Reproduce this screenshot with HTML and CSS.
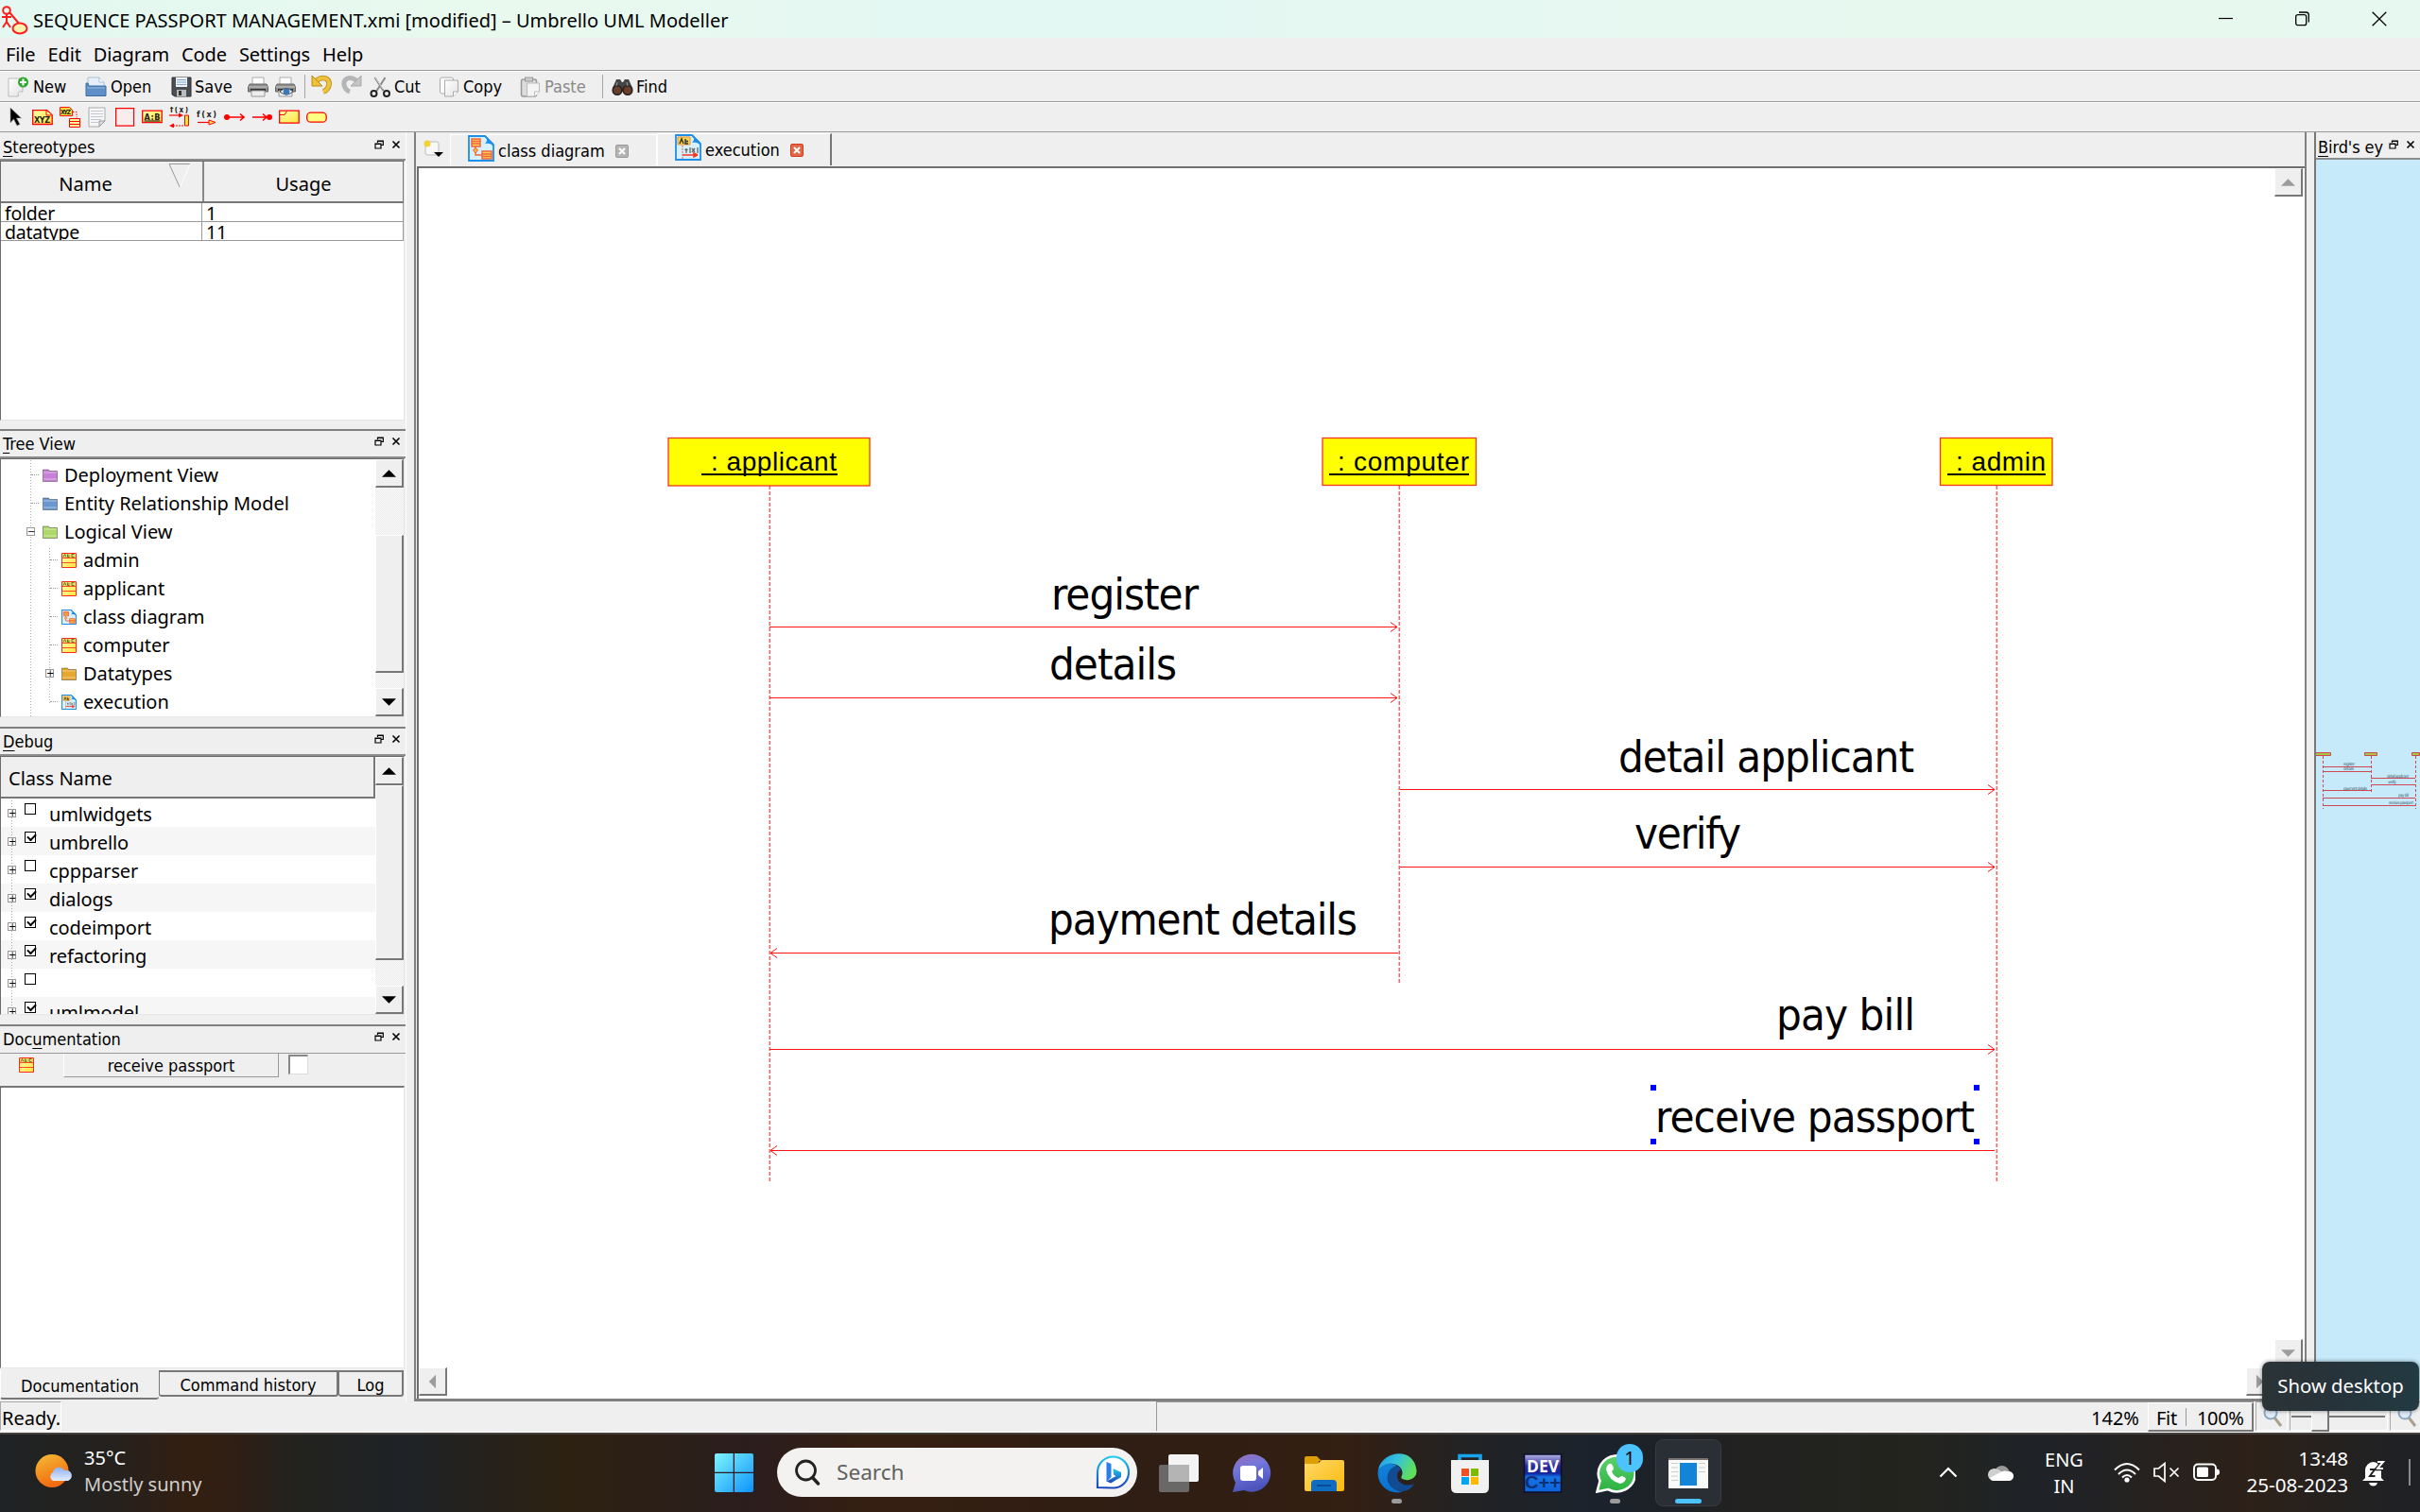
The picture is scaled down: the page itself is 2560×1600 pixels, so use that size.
FILE: index.html
```html
<!DOCTYPE html>
<html lang="en">
<head>
<meta charset="utf-8">
<title>SEQUENCE PASSPORT MANAGEMENT.xmi [modified] – Umbrello UML Modeller</title>
<link rel="stylesheet" href="styles.css">
</head>
<body>
<svg class="defs" width="0" height="0">
  <defs>
    <linearGradient id="gYellow" x1="0" y1="0" x2="1" y2="1"><stop offset="0" stop-color="#ffffb0"/><stop offset="1" stop-color="#ffe43a"/></linearGradient>
    <linearGradient id="gPaper" x1="0" y1="0" x2="1" y2="1"><stop offset="0" stop-color="#fff"/><stop offset="1" stop-color="#e2e2e2"/></linearGradient>
    <linearGradient id="gWin" x1="0" y1="0" x2="1" y2="1"><stop offset="0" stop-color="#7ff4fe"/><stop offset="1" stop-color="#0c93fb"/></linearGradient>
    <linearGradient id="gSun" x1="0" y1="0" x2="0.4" y2="1"><stop offset="0" stop-color="#f3bd35"/><stop offset="1" stop-color="#f36a10"/></linearGradient>
    <linearGradient id="gCloud" x1="0" y1="0" x2="0" y2="1"><stop offset="0" stop-color="#8fb0ee"/><stop offset="1" stop-color="#e4edff"/></linearGradient>
    <linearGradient id="gChat" x1="0" y1="0" x2="0.3" y2="1"><stop offset="0" stop-color="#9b6fb5"/><stop offset=".4" stop-color="#7477dc"/><stop offset="1" stop-color="#4b53bc"/></linearGradient>
    <linearGradient id="gFold" x1="0" y1="0" x2="1" y2="1"><stop offset="0" stop-color="#ffd968"/><stop offset="1" stop-color="#fbb90c"/></linearGradient>
    <linearGradient id="gEdge" x1="0" y1="0" x2="1" y2=".4"><stop offset="0" stop-color="#1c9be8"/><stop offset=".5" stop-color="#35c1de"/><stop offset="1" stop-color="#5fe05c"/></linearGradient>
    <linearGradient id="gEdge2" x1="0" y1="0" x2="0" y2="1"><stop offset="0" stop-color="#1283d8"/><stop offset="1" stop-color="#0a6fd0"/></linearGradient>
    <linearGradient id="gBing" x1="0" y1="0" x2="0" y2="1"><stop offset="0" stop-color="#22c8ee"/><stop offset="1" stop-color="#1a45b8"/></linearGradient>
    <linearGradient id="gDev" x1="0" y1="0" x2="0" y2="1"><stop offset="0" stop-color="#b9b7e8"/><stop offset=".3" stop-color="#2a2c9c"/><stop offset=".5" stop-color="#15249a"/><stop offset=".6" stop-color="#1673e6"/><stop offset="1" stop-color="#0c63d8"/></linearGradient>
    <linearGradient id="gWa" x1="0" y1="0" x2="0" y2="1"><stop offset="0" stop-color="#5fd070"/><stop offset="1" stop-color="#2bb23f"/></linearGradient>
    <symbol id="float" viewBox="0 0 10 10"><path d="M3.500 3V1H9.300v4.500H7M3 1.500h6.500M1 4h6v5H1zM.5 4.500h7" fill="none" stroke="#000" stroke-width="1.200"/></symbol>
    <symbol id="close" viewBox="0 0 10 10"><path d="M1.500 1.500l7 7M8.500 1.500l-7 7" stroke="#000" stroke-width="1.600"/></symbol>
    <symbol id="class" viewBox="0 0 16 16"><path d="M.5.5h15v15H.5z" fill="url(#gYellow)" stroke="#ff2a1a"/><path d="M1 5.500h14M1 10.500h14" stroke="#ff4a2a"/><path d="M1 1h14v4H1z" fill="#e7dc6a"/><path d="M2 4.500l1.500-3L5 4.500M6.500 1.500v3h2M6.500 3h2M13.500 1.500h-2.500v3h2.500" stroke="#5a5a1a" stroke-width=".8" fill="none"/></symbol>
    <symbol id="cdiag" viewBox="0 0 28 28"><path d="M1 1h17l9 9v17H1z" fill="#d6f0fc" stroke="#1d8fe8" stroke-width="1.800"/><path d="M17 1c4 2 4 5 1 8 4-1 7 0 9 3v-3L19 1z" fill="#1d8fe8"/><path d="M4 4h9v8H4zM15 17h10v8H15z" fill="#ffd34e" stroke="#f2643c" stroke-width="1.500"/><path d="M4 6.500h9M4 9h9M15 20h10M15 22.500h10M8 12v9h7" stroke="#f2643c" stroke-width="1.500" fill="none"/><path d="M8 13l2.500 3L8 19l-2.500-3z" fill="#ffb23a" stroke="#f2643c"/></symbol>
    <symbol id="sdiag" viewBox="0 0 28 28"><path d="M1 1h17l9 9v17H1z" fill="#d6f0fc" stroke="#1d8fe8" stroke-width="1.800"/><path d="M17 1c4 2 4 5 1 8 4-1 7 0 9 3v-3L19 1z" fill="#1d8fe8"/><path d="M3 3h13v8H3z" fill="#f7d44a" stroke="#f0903a"/><path d="M5 10l2-5 2 5M11 5v5h3M11 7.500h3" stroke="#333" fill="none" stroke-width="1.400"/><path d="M8 12v14" stroke="#f2643c" stroke-dasharray="2 1"/><path d="M8 22h16l-4-2v4l4-2" stroke="#f03a2a" fill="#f03a2a" stroke-width="1.500"/><path d="M12 20v-5M10.500 16.500h3M16 14v6M18 15l3 4M21 15l-3 4M24 14v6" stroke="#666" stroke-width="1.300"/></symbol>
    <symbol id="folder" viewBox="0 0 16 16"><path d="M.5 2h6l1 1.500h8V14.500H.5z" fill="currentColor" stroke="rgba(0,0,0,.35)"/><path d="M1 5h14M1 12h14" stroke="rgba(255,255,255,.45)"/></symbol>
    <symbol id="zoomer" viewBox="0 0 22 24"><path d="M12 12l7 9" stroke="#a9a08e" stroke-width="3"/><circle cx="8" cy="7" r="6.500" fill="#dfeaf6" stroke="#8ca6c4" stroke-width="2"/></symbol>
    <symbol id="up" viewBox="0 0 16 8"><path d="M0 8L8 0l8 8z" fill="currentColor"/></symbol>
    <symbol id="printer" viewBox="0 0 22 22"><path d="M5 1h12v8H5z" fill="#fff" stroke="#aaa"/><path d="M2 8h18l1.500 3v5H.5v-5z" fill="#8d8d8d" stroke="#666"/><path d="M.8 11h20.400" stroke="#ccc"/><path d="M3 13h16v2H3z" fill="#333"/><path d="M4 15h14v6H4z" fill="#eee" stroke="#999"/></symbol>
  </defs>
</svg>

<header class="titlebar">
  <svg class="app-icon" width="30" height="36" viewBox="0 0 30 36"><g fill="none" stroke="#ff1c1c" stroke-width="2"><circle cx="7" cy="9" r="3.800"/><path d="M7 13v8M2 16h10M7 21l-4 6M7 21l4 6M10 11l11 13"/><ellipse cx="21" cy="28" rx="7.500" ry="5.500" fill="#fff3b0"/></g></svg>
  <span class="title-text">SEQUENCE PASSPORT MANAGEMENT.xmi [modified] – Umbrello UML Modeller</span>
  <div class="win-buttons">
    <svg width="16" height="16" viewBox="0 0 16 16"><path d="M0 7.500h15" stroke="#000" stroke-width="1.200"/></svg>
    <svg width="16" height="16" viewBox="0 0 16 16"><rect x=".7" y="3.700" width="11" height="11" rx="2" fill="none" stroke="#000" stroke-width="1.300"/><path d="M4 1h7.500q2.800 0 2.800 3v7.500" fill="none" stroke="#000" stroke-width="1.300"/></svg>
    <svg width="16" height="16" viewBox="0 0 16 16"><path d="M.7.700l14.600 14.600M15.300.700L.7 15.300" stroke="#000" stroke-width="1.300"/></svg>
  </div>
</header>

<nav class="menubar"><span>File</span><span>Edit</span><span>Diagram</span><span>Code</span><span>Settings</span><span>Help</span></nav>

<div class="toolbar main-tools">
  <span class="tool w-new"><svg width="24" height="22" viewBox="0 0 24 22"><path d="M1 2h15v14l-5 5H1z" fill="url(#gPaper)" stroke="#bbb"/><path d="M11 21l1-5h4" fill="#fff" stroke="#bbb"/><circle cx="16.500" cy="6" r="5.500" fill="#2ba82b"/><path d="M16.500 2.500v7M13 6h7" stroke="#fff" stroke-width="2.200"/></svg>New</span>
  <span class="tool w-open"><svg width="24" height="22" viewBox="0 0 24 22"><path d="M3 1h12l5 5v8H3z" fill="#e6eff9" stroke="#a9bdd4"/><path d="M15 1v5h5" fill="#fff" stroke="#a9bdd4"/><path d="M1 7h2l1 3h18v10.500H1z" fill="#5f8fc6" stroke="#3d6ca3"/><path d="M2 12h19" stroke="#94b8e0"/></svg>Open</span>
  <span class="tool w-save"><svg width="22" height="22" viewBox="0 0 22 22"><path d="M1 1h20v20H4l-3-2z" fill="#4a4d52" stroke="#2e3034"/><path d="M5 1h12v10H5z" fill="#eef2f6"/><path d="M6 3.500h10M6 6h10M6 8.500h10" stroke="#7da7d4"/><path d="M6 14h10v7H6z" fill="#b9bcc0"/><path d="M8 15h3v5H8z" fill="#333"/></svg>Save</span>
  <span class="tool w-print"><svg width="22" height="22"><use href="#printer"/></svg></span>
  <span class="tool w-prev"><svg width="22" height="22"><use href="#printer"/><path d="M5 16q7-7 14 0-7 6-14 0z" fill="#fff" stroke="#444"/><circle cx="12" cy="16" r="3.500" fill="#3c78b8"/></svg></span>
  <i class="sep"></i>
  <span class="tool w-undo"><svg width="24" height="22" viewBox="0 0 24 22"><path d="M6 6c7-5 14-2 13 5-1 4-3 6-6 7" fill="none" stroke="#b98a12" stroke-width="5.500"/><path d="M6 6c7-5 14-2 13 5-1 4-3 6-6 7" fill="none" stroke="#eec23a" stroke-width="4"/><path d="M1 1v11h11z" fill="#eec23a" stroke="#b98a12"/></svg></span>
  <span class="tool w-redo"><svg width="24" height="22" viewBox="0 0 24 22"><path d="M18 6C11 1 4 4 5 11c1 4 3 6 6 7" fill="none" stroke="#b5b5b5" stroke-width="5"/><path d="M23 1v11H12z" fill="#c4c4c4" stroke="#aaa"/></svg></span>
  <span class="tool w-cut"><svg width="23" height="22" viewBox="0 0 22 22"><path d="M5 1l9 14M16 1L7 15" stroke="#888" stroke-width="2"/><path d="M5.500 1l8 12" stroke="#ddd"/><circle cx="4" cy="18" r="3" fill="none" stroke="#222" stroke-width="2"/><circle cx="17.500" cy="18" r="3" fill="none" stroke="#222" stroke-width="2"/></svg>Cut</span>
  <span class="tool w-copy"><svg width="23" height="22" viewBox="0 0 22 22"><rect x="1" y="1" width="14" height="17" rx="2" fill="#fafafa" stroke="#aaa"/><path d="M6 4h14v12l-5 5H6z" fill="url(#gPaper)" stroke="#aaa"/><path d="M15 21v-5h5" fill="#fff" stroke="#aaa"/></svg>Copy</span>
  <span class="tool w-paste"><svg width="23" height="22" viewBox="0 0 22 22"><rect x="1" y="3" width="16" height="18" rx="2" fill="#ddd" stroke="#999" stroke-width="1.500"/><rect x="5" y="1" width="8" height="4" fill="#ccc" stroke="#999"/><path d="M7 7h13v9l-5 5H7z" fill="#f4f4f4" stroke="#bbb"/><path d="M15 21v-5h5" fill="#fff" stroke="#bbb"/></svg>Paste</span>
  <i class="sep"></i>
  <span class="tool w-find"><svg width="23" height="18" viewBox="0 0 23 18"><path d="M5 1h4l2 3h1l2-3h4l4 9v4H1v-4z" fill="#444"/><circle cx="6" cy="12.500" r="4.800" fill="#6b3d2a" stroke="#222" stroke-width="1.600"/><circle cx="17" cy="12.500" r="4.800" fill="#6b3d2a" stroke="#222" stroke-width="1.600"/><path d="M6 4l-1 4M16 4l1 4" stroke="#999"/></svg>Find</span>
</div>

<div class="toolbar draw-tools">
  <svg width="22" height="22" viewBox="0 0 22 22"><path d="M6 1v16l3.500-4 3.500 7 3-1.500-3.500-6.500h5z" fill="#000" stroke="#999" stroke-width=".6"/></svg>
  <svg width="22" height="22" viewBox="0 0 22 22"><path d="M.7 3.700h15l5.500 5v9.800H.7z" fill="url(#gYellow)" stroke="red" stroke-width="1.300"/><path d="M15 4v5h6" fill="#fff9a0" stroke="red"/><text x="2" y="16.500" class="glyph b9" textLength="17">XYZ</text></svg>
  <svg width="22" height="22" viewBox="0 0 22 22"><path d="M.6.600h10l3 3v6H.6z" fill="#ffe43a" stroke="red"/><text x="1" y="8" class="glyph b7" textLength="11">XYZ</text><path d="M14 5.500h4v6" fill="none" stroke="red" stroke-dasharray="1.500 1.500"/><path d="M10.500 12.500h11v9h-11zM10.500 15.500h11M10.500 18.500h11" fill="#fff59a" stroke="red"/></svg>
  <svg width="22" height="22" viewBox="0 0 22 22"><path d="M2 1h17v14l-6 6H2z" fill="#f6f6f6" stroke="#aaa"/><path d="M4 4.500h13M4 7.500h13M4 10.500h13M4 13.500h11M4 16.500h8" stroke="#c4c8d4"/><path d="M13 21v-6h6z" fill="#ddd" stroke="#999"/></svg>
  <svg width="22" height="22" viewBox="0 0 22 22"><path d="M1.600 1.600h19v18.500h-19z" fill="#f8ecec" stroke="red" stroke-width="1.200"/></svg>
  <svg width="22" height="22" viewBox="0 0 22 22"><path d="M.7 4.200h20.500v12.500H.7z" fill="url(#gYellow)" stroke="red" stroke-width="1.300"/><text x="2.500" y="13.500" class="glyph b9" textLength="17">A:B</text><path d="M2.500 15h17" stroke="#222" stroke-width="1.200"/></svg>
  <svg width="22" height="22" viewBox="0 0 22 22"><text x="1" y="6" class="glyph b8" textLength="19">f(x)</text><path d="M16.500 9h4v11h-4z" fill="#ffe43a" stroke="red"/><path d="M0 9h11" stroke="red" stroke-width="1.200"/><path d="M10 6.500l5 2.500-5 2.500zM5 17.500l-5 2.500 5 2.500z" fill="red"/><path d="M4 20h11" stroke="red" stroke-dasharray="2 1"/></svg>
  <svg width="22" height="22" viewBox="0 0 22 22"><text x="0" y="10.500" class="glyph b9" textLength="21">f(x)</text><path d="M1 16.500h12" stroke="red" stroke-width="1.200"/><path d="M13 14l7 2.500-7 2.500z" fill="#ffe43a" stroke="red"/></svg>
  <svg width="22" height="22" viewBox="0 0 22 22"><path d="M4 11h17M17 7.500l4 3.500-4 3.500" fill="none" stroke="red" stroke-width="1.600"/><circle cx="3" cy="11" r="3" fill="red"/></svg>
  <svg width="22" height="22" viewBox="0 0 22 22"><path d="M1 11h17M12 7.500l4 3.500-4 3.500" fill="none" stroke="red" stroke-width="1.600"/><circle cx="19" cy="11" r="3" fill="red"/></svg>
  <svg width="22" height="22" viewBox="0 0 22 22"><path d="M.7 4.200h20.500v13H.7z" fill="url(#gYellow)" stroke="red" stroke-width="1.300"/><path d="M1 8.500h5l2.500-4" fill="none" stroke="red"/></svg>
  <svg width="22" height="22" viewBox="0 0 22 22"><rect x=".7" y="6.200" width="20.500" height="10" rx="4" fill="#ffff80" stroke="red" stroke-width="1.300"/></svg>
</div>

<main class="work">
  <aside class="left">
    <section class="dock d-stereo">
      <h2><span><u>S</u>tereotypes</span><svg><use href="#float"/></svg><svg><use href="#close"/></svg></h2>
      <div class="sunk">
        <div class="grid-head"><span>Name</span><svg width="24" height="26" viewBox="0 0 24 26"><path d="M23 1L12.500 25" stroke="#fff"/><path d="M23 .5H1L12 25" fill="none" stroke="#999"/></svg><span>Usage</span></div>
        <div class="grid-row"><span>folder</span><span>1</span></div>
        <div class="grid-row"><span>datatype</span><span>11</span></div>
      </div>
    </section>
    <section class="dock d-tree">
      <h2><span><u>T</u>ree View</span><svg><use href="#float"/></svg><svg><use href="#close"/></svg></h2>
      <div class="sunk scrolled">
        <ul class="tree">
          <li class="l1"><i></i><svg class="f-violet"><use href="#folder"/></svg>Deployment View</li>
          <li class="l1"><i></i><svg class="f-blue"><use href="#folder"/></svg>Entity Relationship Model</li>
          <li class="l1"><i class="box">−</i><svg class="f-green"><use href="#folder"/></svg>Logical View</li>
          <li class="l2"><b></b><i></i><svg><use href="#class"/></svg>admin</li>
          <li class="l2"><b></b><i></i><svg><use href="#class"/></svg>applicant</li>
          <li class="l2"><b></b><i></i><svg><use href="#cdiag"/></svg>class diagram</li>
          <li class="l2"><b></b><i></i><svg><use href="#class"/></svg>computer</li>
          <li class="l2"><b></b><i class="box">+</i><svg class="f-gold"><use href="#folder"/></svg>Datatypes</li>
          <li class="l2 end"><b></b><i></i><svg><use href="#sdiag"/></svg>execution</li>
        </ul>
        <div class="vbar vb-tree"><span class="btn"><svg><use href="#up"/></svg></span><span class="thumb"></span><span class="btn down"><svg><use href="#up"/></svg></span></div>
      </div>
    </section>
    <section class="dock d-debug">
      <h2><span><u>D</u>ebug</span><svg><use href="#float"/></svg><svg><use href="#close"/></svg></h2>
      <div class="sunk scrolled">
        <div class="debug-list">
          <div class="list-head">Class Name</div>
          <ul>
            <li><i class="box">+</i><em></em><span>umlwidgets</span></li>
            <li><i class="box">+</i><em class="on"></em><span>umbrello</span></li>
            <li><i class="box">+</i><em></em><span>cppparser</span></li>
            <li><i class="box">+</i><em class="on"></em><span>dialogs</span></li>
            <li><i class="box">+</i><em class="on"></em><span>codeimport</span></li>
            <li><i class="box">+</i><em class="on"></em><span>refactoring</span></li>
            <li><i class="box">+</i><em></em><span></span></li>
            <li><i class="box">+</i><em class="on"></em><span>umlmodel</span></li>
          </ul>
        </div>
        <div class="vbar vb-debug"><span class="btn"><svg><use href="#up"/></svg></span><span class="thumb"></span><span class="btn down"><svg><use href="#up"/></svg></span></div>
      </div>
    </section>
    <section class="dock d-doc">
      <h2><span>Doc<u>u</u>mentation</span><svg><use href="#float"/></svg><svg><use href="#close"/></svg></h2>
      <div class="doc-row"><svg width="16" height="16"><use href="#class"/></svg><span class="doc-name">receive passport</span><span class="doc-check"></span></div>
      <div class="sunk doc-text"></div>
      <div class="dock-tabs"><span class="on">Documentation</span><span>Command history</span><span>Log</span></div>
    </section>
  </aside>

  <section class="center">
    <div class="tabs">
      <svg class="newtab" width="22" height="20" viewBox="0 0 22 20"><rect x="2" y="2" width="14" height="14" rx="2" fill="#f8f8f8" stroke="#bbb"/><circle cx="4" cy="4" r="3.500" fill="#f4d03a"/><path d="M11 13h10l-5 5z" fill="#000"/></svg>
      <span class="tab"><svg width="28" height="28"><use href="#cdiag"/></svg>class diagram<svg class="x" width="14" height="14" viewBox="0 0 14 14"><rect x=".5" y=".5" width="13" height="13" rx="1.500" fill="#b4b4b4" stroke="#999"/><path d="M4 4l6 6M10 4l-6 6" stroke="#fff" stroke-width="2"/></svg></span>
      <span class="tab active"><svg width="28" height="28"><use href="#sdiag"/></svg>execution<svg class="x" width="14" height="14" viewBox="0 0 14 14"><rect x=".5" y=".5" width="13" height="13" rx="1.500" fill="#e0694a" stroke="#d43a20"/><path d="M4 4l6 6M10 4l-6 6" stroke="#fff" stroke-width="2"/></svg></span>
    </div>
    <div class="canvas">
      <svg class="diagram" width="1963" height="1269" viewBox="443 178 1963 1269">
        <g fill="#ff0" stroke="#f53620" stroke-width="1.300">
          <rect x="707" y="463.500" width="213" height="50.500"/>
          <rect x="1399" y="463.500" width="162.500" height="50"/>
          <rect x="2052.500" y="463.500" width="118.500" height="50"/>
        </g>
        <g class="life">
          <path d="M814.200 514v737M1480.200 514v528M2112.200 514v737"/>
        </g>
        <g class="msg">
          <path d="M814 663.500H1478M1471 658.500l7 5-7 5"/>
          <path d="M814 738.500H1478M1471 733.500l7 5-7 5"/>
          <path d="M1481 835.500H2110M2103 830.500l7 5-7 5"/>
          <path d="M1481 917.500H2110M2103 912.500l7 5-7 5"/>
          <path d="M1479 1008.500H815M822 1003.500l-7 5 7 5"/>
          <path d="M814 1110.500H2110M2103 1105.500l7 5-7 5"/>
          <path d="M2110 1217.500H815M822 1212.500l-7 5 7 5"/>
        </g>
        <g class="actor">
          <text x="752" y="498" textLength="133">: applicant</text>
          <text x="1415" y="498" textLength="139">: computer</text>
          <text x="2069" y="498" textLength="95">: admin</text>
          <path d="M742 502h144M1406 502h148M2060 502h104"/>
        </g>
        <g class="label">
          <text x="1112" y="645" textLength="156">register</text>
          <text x="1110" y="719" textLength="135">details</text>
          <text x="1712" y="817" textLength="313">detail applicant</text>
          <text x="1729" y="898" textLength="113">verify</text>
          <text x="1109" y="989" textLength="327">payment details</text>
          <text x="1879" y="1090" textLength="147">pay bill</text>
          <text x="1751" y="1198" textLength="338">receive passport</text>
        </g>
        <path d="M1746 1148h6v6h-6zM2088 1148h6v6h-6zM1746 1205h6v6h-6zM2088 1205h6v6h-6z" fill="#00f"/>
      </svg>
      <div class="cv-right"><span class="btn"><svg><use href="#up"/></svg></span><span class="btn down"><svg><use href="#up"/></svg></span></div>
      <div class="cv-bottom"><span class="btn lft"><svg><use href="#up"/></svg></span><span class="btn rgt"><svg><use href="#up"/></svg></span></div>
    </div>
  </section>

  <aside class="right">
    <h2><span><u>B</u>ird's ey</span><svg><use href="#float"/></svg><svg><use href="#close"/></svg></h2>
    <svg class="bird" width="108" height="1311" viewBox="2451 169 108 1311">
      <g stroke="#cf4655" fill="none">
        <path d="M2457.500 800v56M2508.500 800v40M2555.500 800v56" stroke-dasharray="3 2"/>
        <path d="M2457 811.500h51M2457 816.500h51M2508 823.500h47M2508 830.500h47M2457 836.500h51M2457 844.500h98M2457 852.500h98"/>
        <path d="M2449 796.500h16.500v3H2449zM2501.500 796.500h13v3h-13zM2551.500 796.500h8v3h-8z" fill="#a7c83c"/>
      </g>
      <g class="mini">
        <text x="2479" y="809.500" textLength="12">register</text><text x="2479" y="814.500" textLength="11">details</text>
        <text x="2525" y="822.500" textLength="23">detail applicant</text><text x="2526" y="828.500" textLength="9">verify</text>
        <text x="2479" y="835.500" textLength="25">payment details</text><text x="2537" y="842.500" textLength="11">pay bill</text>
        <text x="2527" y="851" textLength="26">receive passport</text>
      </g>
    </svg>
  </aside>
</main>

<footer class="status">
  <span class="ready">Ready.</span>
  <div class="zoom-panel"><span class="pct">142%</span><span class="zoom-btns"><span>Fit</span><i></i><span>100%</span></span></div>
  <span class="zcell z1"><svg width="22" height="24"><use href="#zoomer"/></svg></span>
  <span class="slider"><i></i></span>
  <span class="zcell z2"><svg width="22" height="24"><use href="#zoomer"/></svg></span>
</footer>

<footer class="taskbar">
  <div class="weather">
    <svg width="40" height="38" viewBox="0 0 40 38"><circle cx="18" cy="18.500" r="17.500" fill="url(#gSun)"/><path d="M19 29a5 5 0 010-9 6.500 6.500 0 0112-2 5.500 5.500 0 014 11z" fill="url(#gCloud)"/></svg>
    <div><p>35°C</p><p class="dim">Mostly sunny</p></div>
  </div>
  <svg class="start" width="41" height="41" viewBox="0 0 41 41"><path d="M2 0h17.700v19.700H0V2q0-2 2-2zM21 0h18q2 0 2 2v17.700H21zM0 21h19.700v20H2q-2 0-2-2zM21 21h20v18q0 2-2 2H21z" fill="url(#gWin)"/></svg>
  <div class="search">
    <svg width="28" height="28" viewBox="0 0 28 28"><circle cx="12.500" cy="12" r="10" fill="none" stroke="#222" stroke-width="2.800"/><path d="M19.500 19.500l6 6.500" stroke="#222" stroke-width="3.400" stroke-linecap="round"/></svg>
    <span>Search</span>
    <svg width="36" height="36" viewBox="0 0 36 36"><path d="M2 34V18A16.500 16.500 0 1 1 18.500 34.500z" fill="#fff" stroke="url(#gBing)" stroke-width="2.200"/><path d="M11.500 7l5 2v14l-5 5z" fill="#2b7de8"/><path d="M18.500 14l8.500 4v5l-11 6.500-4.500-2 10-5.500-2.500-1.500z" fill="url(#gBing)"/></svg>
  </div>
  <div class="apps">
    <span class="slot"><svg width="42" height="42" viewBox="0 0 42 42"><rect x="10" y="1" width="32" height="29" rx="2" fill="#f4f4f4"/><rect x="0" y="12" width="32" height="29" rx="2" fill="#6a6866"/><path d="M10 12h22v18H10z" fill="#b4b4b4"/></svg></span>
    <span class="slot"><svg width="42" height="42" viewBox="0 0 42 42"><path d="M1 41l3-10A20 20 0 1 1 13 39z" fill="url(#gChat)"/><rect x="9" y="13" width="17" height="16" rx="3" fill="#fff"/><path d="M28 19l5-4v12l-5-4z" fill="#fff"/></svg></span>
    <span class="slot"><svg width="42" height="42" viewBox="0 0 42 42"><path d="M0 5q0-2 2-2h11l5 5h-3v8H0z" fill="#dd9f08"/><path d="M0 11h14l4-4h22q2 0 2 2v29q0 2-2 2H2q-2 0-2-2z" fill="url(#gFold)"/><path d="M7 40V32q0-4 4-4h19q4 0 4 4v8z" fill="#0f6cc0"/><path d="M13 34h15" stroke="#0a4b94" stroke-width="2"/></svg></span>
    <span class="slot run"><svg width="42" height="42" viewBox="0 0 42 42"><path d="M1 17C5 10 14 9 21 13c-9 3-12 11-9 18 3 6 9 9 15 9.500A20.500 20.500 0 0 1 .5 21z" fill="url(#gEdge2)"/><path d="M1 17C5-3 39-8 41.500 18c.5 9-9 12-15 9-3-1.500.5-3 0-7C25.500 10 10 7 1 17z" fill="url(#gEdge)"/><path d="M21 13c-10 2-13 13-8 20 4 6 12 8 17 6.500 4-1 7-4 9-7.500-8 4-18 0-18-8 0-4 2-6 4-7-1-2-2-3.500-4-4z" fill="#114b92"/></svg></span>
    <span class="slot"><svg width="42" height="42" viewBox="0 0 42 42"><path d="M10 9V2.500h22V9" fill="none" stroke="#18a5ee" stroke-width="3.600"/><path d="M1 7h40v29q0 6-6 6H7q-6 0-6-6z" fill="#f1f1f1"/><path d="M12 16h8v8h-8z" fill="#f25022"/><path d="M22 16h8v8h-8z" fill="#7fba00"/><path d="M12 25h8v8h-8z" fill="#00a4ef"/><path d="M22 25h8v8h-8z" fill="#ffb900"/></svg></span>
    <span class="slot"><svg width="42" height="42" viewBox="0 0 42 42"><path d="M1.500 1h39v40h-39z" fill="url(#gDev)" stroke="#0c0e30" stroke-width="1.500"/><text x="4" y="20" class="dev" textLength="34" lengthAdjust="spacingAndGlyphs">DEV</text><text x="2" y="37" class="cpp" textLength="38" lengthAdjust="spacingAndGlyphs">C++</text></svg></span>
    <span class="slot run"><svg width="42" height="42" viewBox="0 0 42 42"><path d="M1.500 40.500l3-11.500A19.500 19 0 1 1 13 38z" fill="url(#gWa)" stroke="#fff" stroke-width="2.600"/><path d="M13 12q3-3 5 1l1 3q0 1-2 3 2 5 7 7l3-2q1-.5 3 1 3 1 1 4-2 3-5 3Q14 29 11 17q0-3 2-5z" fill="#fff"/></svg><b class="badge">1</b></span>
    <span class="slot current"><svg width="42" height="32" viewBox="0 0 42 32"><path d="M0 0h42v32H0z" fill="#fafafa"/><path d="M0 0h42v2H0z" fill="#7d7470"/><path d="M12 5h18v24H12z" fill="#1384d8"/><path d="M3 5.500h7M3 10h7M3 14.500h7M3 19h7M3 23.500h7M32 5.500h7M32 10h7M32 14.500h7" stroke="#ccc"/></svg></span>
  </div>
  <div class="tray">
    <svg class="t-chev" width="20" height="12" viewBox="0 0 20 12"><path d="M1.500 10.500L10 2l8.500 8.500" fill="none" stroke="#fff" stroke-width="2.200"/></svg>
    <svg class="t-cloud" width="28" height="18" viewBox="0 0 28 18"><path d="M7 8a8 8 0 0114-3l3 5-8 4z" fill="#9a9a9a"/><path d="M6 18a6 6 0 011-13q4 0 7 3l9 10z" fill="#cfcfcf"/><path d="M2 15l13-7q3-1 6 0a5 5 0 012 10H6q-3 0-4-3z" fill="#fff"/></svg>
    <div class="t-lang"><p>ENG</p><p>IN</p></div>
    <svg class="t-wifi" width="28" height="22" viewBox="0 0 28 22"><path d="M1 8.500Q14-4.500 27 8.500M5 13q9-9 18 0M9 16.500q5-5 10 0" fill="none" stroke="#fff" stroke-width="2"/><circle cx="14" cy="19" r="2.600" fill="#fff"/></svg>
    <svg class="t-vol" width="28" height="22" viewBox="0 0 28 22"><path d="M1 7h4.500L12 1.500v19L5.500 15H1zM17.500 6.500l9 9M26.500 6.500l-9 9" fill="none" stroke="#fff" stroke-width="1.700"/></svg>
    <svg class="t-bat" width="28" height="20" viewBox="0 0 28 20"><rect x="1" y="1.500" width="23" height="16.500" rx="4" fill="none" stroke="#fff" stroke-width="1.900"/><rect x="4" y="4.500" width="12" height="10.500" rx="1.500" fill="#fff"/><path d="M25 6.500q3 0 3 3.200t-3 3.200z" fill="#fff"/></svg>
    <div class="t-time"><p>13:48</p><p>25-08-2023</p></div>
    <svg class="t-bell" width="26" height="28" viewBox="0 0 26 28"><path d="M3 19v-8a8.500 9 0 0117 0v8l3 3H0zM7 24h9q-1 3.500-4.500 3.500T7 24z" fill="#fff"/><path d="M16 2h6l-6 7h6" fill="none" stroke="#222" stroke-width="4.500"/><path d="M16 2h6l-6 7h6" fill="none" stroke="#fff" stroke-width="2"/><path d="M8 10h5l-5 7h5.500" fill="none" stroke="#222" stroke-width="2"/></svg>
    <i class="t-line"></i>
  </div>
</footer>
<div class="tooltip">Show desktop</div>
</body>
</html>
```
FILE: styles.css
```css
* { box-sizing: border-box; margin: 0; padding: 0; }
body {
  width: 2560px; height: 1600px; overflow: hidden;
  display: flex; flex-direction: column;
  background: #efefef; color: #000;
  font: 20px/28px "Noto Sans", "Open Sans", sans-serif;
}
ul { list-style: none; }
i, em { font-style: normal; }
.defs { position: absolute; }
svg { flex: none; display: block; }
u { text-decoration: underline; text-underline-offset: 3px; text-decoration-thickness: 1px; }

.titlebar { height: 40px; flex: none; display: flex; align-items: center; background: linear-gradient(90deg, #e3f8f1, #e9f9ee 22%, #e3f7f3 40%, #e7f8ef 80%, #e6f8ef); }
.title-text { margin: 3px 0 0 5px; }
.win-buttons { margin-left: auto; display: flex; gap: 65px; padding-right: 35px; }

.menubar { height: 35px; flex: none; display: flex; gap: 13px; padding: 4px 0 0 6px; border-bottom: 1px solid #9a9a9a; letter-spacing: -.12px; }

.toolbar { flex: none; display: flex; align-items: center; border-top: 1px solid #fff; border-bottom: 1px solid #9a9a9a; font: 18px/22px "DejaVu Sans Condensed", "DejaVu Sans", sans-serif; }
.main-tools { height: 33px; padding-left: 8px; }
.draw-tools { height: 32px; padding-left: 5px; gap: 7px; }
.tool { display: flex; align-items: center; gap: 3px; flex: none; white-space: nowrap; }
.w-new { width: 82px; } .w-open { width: 91px; } .w-save { width: 81px; } .w-print { width: 29px; } .w-prev { width: 31px; }
.sep { width: 1px; height: 25px; background: #a6a6a6; flex: none; }
.w-undo { width: 30px; margin-left: 6px; } .w-redo { width: 32px; } .w-cut { width: 73px; } .w-copy { width: 86px; } .w-paste { width: 87px; color: #8a8a8a; }
.w-undo svg, .w-redo svg { margin-top: -3px; }
.w-find { margin-left: 9px; }
.glyph { font-family: "DejaVu Sans Condensed", sans-serif; font-weight: bold; fill: #222; }
.b7 { font-size: 7px; } .b8 { font-size: 8px; } .b9 { font-size: 9px; }

.work { height: 1343px; flex: none; display: flex; }
.left { width: 430px; flex: none; border-right: 1px solid #fff; display: flex; flex-direction: column; }
h2 { font: 18px/22px "DejaVu Sans Condensed", "DejaVu Sans", sans-serif; height: 30px; padding: 5px 3px 0 3px; display: flex; border-bottom: 2px solid #8c8c8c; white-space: nowrap; }
h2 span { flex: 1; }
h2 svg { width: 10px; height: 10px; margin-top: 3px; }
.dock { flex: none; display: flex; flex-direction: column; }
.left h2 { padding-right: 5px; gap: 8px; }
.left .d-tree h2, .left .d-debug h2, .left .d-doc h2 { height: 29px; padding-top: 3px; }
.sunk { flex: 1; min-height: 0; background: #fff; border: 1px solid #6b6b6b; border-right-color: #e6e6e6; border-bottom-color: #e6e6e6; margin-right: 1px; overflow: hidden; }
.d-stereo { height: 305px; }
.d-tree, .d-debug { border-top: 2px solid #808080; }
.d-tree { height: 305px; margin-top: 9px; }
.d-debug { height: 305px; margin-top: 10px; }
.d-doc { height: 399px; margin-top: 10px; border-top: 2px solid #808080; }

.grid-head { height: 44px; display: grid; grid-template-columns: 177px 36px 1fr; align-items: center; text-align: center; background: #efefef; border-bottom: 2px solid #777; border-right: 1px solid #777; }
.grid-head span { padding-top: 5px; }
.grid-head span:first-child { padding-left: 2px; }
.grid-head span:last-child { border-left: 2px solid #888; height: 42px; line-height: 38px; }
.grid-head svg { margin-top: -12px; }
.grid-row { height: 20px; display: grid; grid-template-columns: 212px 1fr; border-bottom: 1px solid #999; border-right: 1px solid #999; font-size: 19.500px; line-height: 22px; overflow: hidden; }
.grid-row span { padding-left: 4px; height: 19px; letter-spacing: -.25px; }
.grid-row span + span { border-left: 1px solid #999; }

.scrolled { display: flex; }
.tree { flex: 1; padding-top: 3px; background: repeating-linear-gradient(0deg, #aaa 0 1px, #fff 1px 3px) 31px 0 / 1px 100% no-repeat; }
.tree li { height: 30px; display: flex; align-items: center; line-height: 28px; padding-bottom: 2px; white-space: pre; letter-spacing: -.05px; }
.tree li svg { width: 16px; height: 16px; margin-right: 7px; margin-top: -1px; }
.tree i { height: 1px; width: 8px; margin: -1px 4px 0 32px; border-top: 1px dotted #999; }
.tree .l2 b { width: 1px; height: 30px; margin-left: 51px; background: repeating-linear-gradient(0deg, #aaa 0 1px, #fff 1px 3px); }
.tree .l2.end b { height: 15px; margin-top: -14px; }
.tree .l2 i { margin-left: 0; width: 8px; }
.box, .tree .box { width: 9px; height: 9px; border: 1px solid #999; background: #fff; font: 10px/7px "DejaVu Sans", sans-serif; text-align: center; flex: none; }
.tree .box { margin-left: 27px; margin-right: 8px; }
.tree .l2 .box { margin-left: -5px; margin-right: 8px; width: 9px; }
.f-violet { color: #c77fd8; } .f-blue { color: #6b97d0; } .f-green { color: #acd968; } .f-gold { color: #e5a72c; }

.vbar { width: 30px; flex: none; display: flex; flex-direction: column; background: repeating-conic-gradient(#eaeaea 0 25%, #fbfbfb 0 50%) 0 0 / 2px 2px; }
.btn { width: 30px; height: 30px; flex: none; background: #efefef; border: 1px solid #fff; border-right: 2px solid #777; border-bottom: 2px solid #777; display: flex; align-items: center; justify-content: center; }
.btn svg { width: 15px; height: 8px; }
.down svg { transform: rotate(180deg); } .lft svg { transform: rotate(-90deg); } .rgt svg { transform: rotate(90deg); }
.thumb { background: #efefef; border: 1px solid #fff; border-right: 2px solid #777; border-bottom: 2px solid #777; }
.vb-tree .thumb { margin: 50px 0 auto; height: 146px; }
.vb-debug .thumb { margin: 0 0 auto; height: 185px; }

.debug-list { flex: 1; min-width: 0; }
.list-head { height: 44px; background: #efefef; border-bottom: 2px solid #777; border-right: 2px solid #777; padding-left: 8px; line-height: 46px; }
.debug-list ul { background: repeating-linear-gradient(0deg, #aaa 0 1px, transparent 1px 3px) 11px 0 / 1px 100% no-repeat; }
.debug-list li { height: 30px; display: flex; }
.debug-list li:nth-child(even) { background: rgba(128,128,128,.07); }
.debug-list .box { margin: 11px 0 0 7px; }
.debug-list em { width: 12px; height: 12px; border: 1px solid #000; margin: 5px 0 0 9px; background: #fff; }
.debug-list em.on { position: relative; }
.debug-list em.on::after { content: ""; position: absolute; left: 2px; top: 1px; width: 7px; height: 4px; border: solid #000; border-width: 0 0 2px 2px; transform: rotate(-45deg); }
.debug-list li span { margin-left: 14px; line-height: 33px; letter-spacing: -.1px; }

.left .d-doc h2 { border-bottom: 1px solid #999; }
.doc-row { height: 34px; display: flex; padding-left: 20px; }
.doc-row svg { margin-top: 4px; }
.doc-name { width: 228px; height: 25px; margin: 0 0 0 31px; border: 1px solid #fff; border-width: 0 1px 1px 1px; border-right-color: #999; border-bottom-color: #999; text-align: center; font: 18px/26px "DejaVu Sans Condensed", sans-serif; }
.doc-check { width: 21px; height: 21px; margin: 1px 0 0 10px; background: #fff; border: 1px solid #888; border-width: 2px 1px 1px 2px; border-right-color: #ddd; border-bottom-color: #ddd; }
.doc-text { flex: 1; border-top: 2px solid #777; }
.dock-tabs { height: 33px; margin-top: 2px; display: flex; font: 18px/29px "DejaVu Sans Condensed", sans-serif; text-align: center; }
.dock-tabs span { height: 28px; border: 2px solid #777; border-left-width: 1px; border-radius: 0 0 3px 3px; line-height: 27px; }
.dock-tabs .on { height: 31px; width: 168px; border: 0; border-bottom: 2px solid #777; border-left: 1px solid #fff; line-height: 33px; }
.dock-tabs span:nth-child(2) { width: 190px; }
.dock-tabs span:nth-child(3) { width: 69px; }

.center { width: 2002px; flex: none; margin-left: 8px; border-left: 2px solid #808080; border-bottom: 3px solid #808080; border-right: 2px solid #808080; display: flex; flex-direction: column; }
.tabs { height: 36px; flex: none; display: flex; padding-left: 8px; background: #efefef; font: 18px/22px "DejaVu Sans Condensed", sans-serif; }
.newtab { margin: 8px 6px 0 0; }
.tab { display: flex; height: 33px; margin-top: 2px; width: 219px; padding-left: 18px; border: 1px solid #fff; border-bottom: 0; gap: 4px; line-height: 34px; }
.tab .x { margin: 10px 0 0 7px; }
.tab.active { margin-top: 1px; height: 34px; width: 185px; border-right: 2px solid #777; }
.canvas { flex: 1; background: #fff; display: grid; grid-template-columns: 1963px 30px; grid-template-rows: 1269px 30px; border: solid #6e6e6e; border-width: 2px 0 0 2px; margin-left: 1px; color: #9c9c9c; }
.cv-right { display: flex; flex-direction: column; justify-content: space-between; }
.cv-bottom { display: flex; justify-content: space-between; }
.life path { stroke: #ff3a3a; stroke-width: 1.200; stroke-dasharray: 4 2; fill: none; }
.msg path { stroke: #ff1414; stroke-width: 1; fill: none; }
.actor text { font: 28px "Liberation Sans", Arial, sans-serif; }
.actor path { stroke: #000; stroke-width: 2.200; }
.label text { font: 47px "DejaVu Sans Condensed", Tahoma, sans-serif; }

.right { width: 112px; flex: none; margin-left: 8px; border-left: 2px solid #777; }
.right h2 { padding: 5px 5px 0 2px; height: 29px; }
.right h2 span { min-width: 0; letter-spacing: -.1px; }
.right h2 svg + svg { margin-left: 8px; }
.bird { background: #c6eafa; width: 110px; }
.mini text { font: 4.500px "DejaVu Sans Condensed", sans-serif; fill: #47626e; }

.status { height: 33px; flex: none; display: flex; padding-bottom: 1px; border-bottom: 1px solid #fff; }
.ready { width: 66px; border: 1px solid #aaa; border-right-color: #fff; border-bottom-color: #fff; padding-left: 1px; line-height: 33px; }
.zoom-panel { margin-left: 1158px; width: 1161px; border-left: 1px solid #999; border-top: 1px solid #999; display: flex; justify-content: flex-end; line-height: 33px; flex: none; }
.pct { margin-right: 9px; }
.zoom-btns { width: 112px; height: 31px; display: flex; gap: 11px; padding-left: 8px; line-height: 32px; border: 1px solid #fff; border-right: 2px solid #777; border-bottom: 2px solid #777; letter-spacing: -.3px; }
.zoom-btns i { width: 1px; height: 19px; margin-top: 5px; margin-left: -2px; background: #999; }
.zcell { width: 34px; margin-left: 2px; border: 1px solid #aaa; border-right-color: #fff; border-bottom-color: #fff; padding: 4px 0 0 7px; overflow: hidden; flex: none; }
.slider { width: 104px; flex: none; margin-left: 2px; border: 1px solid #aaa; border-right-color: #fff; border-bottom-color: #fff; background: linear-gradient(#777,#777) 1px 14px / 99px 2px no-repeat; }
.slider i { display: block; width: 19px; height: 31px; margin-left: 22px; background: #efefef; border-right: 2px solid #777; border-bottom: 2px solid #777; border-left: 1px solid #fff; }

.taskbar {
  height: 84px; flex: none; display: flex; color: #fff; border-top: 2px solid #46403c;
  background: linear-gradient(90deg, #1f2224 0, #24211e 110px, #331f12 200px, #2f1f15 250px, #22221f 320px, #1e2226 430px, #2d2212 600px, #2a1d1d 790px, #361f12 920px, #2f1e14 1200px, #341f12 1420px, #232323 1540px, #1a222c 1690px, #212121 1830px, #24241e 2020px, #1f2328 2160px, #2d2118 2380px, #1f2125 2540px);
}
.weather { width: 756px; display: flex; padding: 20px 0 0 37px; gap: 12px; }
.weather div { margin-top: -9px; }
.dim { color: #d0cfcd; }
.start { margin-top: 20px; }
.search { width: 381px; height: 52px; margin: 14px 0 0 25px; border-radius: 26px; background: #f3f2f0; display: flex; align-items: center; padding: 0 8px 0 18px; }
.search span { flex: 1; padding-left: 17px; font-size: 22.600px; color: #606060; }
.apps { display: flex; margin-left: 9px; padding-top: 5px; gap: 7px; }
.slot { width: 70px; height: 71px; display: flex; align-items: center; justify-content: center; position: relative; border-radius: 8px; flex: none; }
.run::after { content: ""; position: absolute; left: 29px; bottom: 3px; width: 11px; height: 5px; border-radius: 3px; background: #9b9b9b; }
.current { background: #2a2f36; border: 1px solid #383c41; }
.current::after { content: ""; position: absolute; left: 20px; bottom: 2px; width: 28px; height: 5px; border-radius: 3px; background: #4cc2ff; }
.badge { position: absolute; left: 36px; top: 5px; width: 28px; height: 30px; border-radius: 14px; background: #4cc2ff; color: #000; font-weight: 400; text-align: center; line-height: 29px; }
.dev { font: bold 17px "Open Sans", sans-serif; fill: #fff; }
.cpp { font: bold 19px "Liberation Sans", sans-serif; fill: #0c2f74; }
.tray { display: flex; margin-left: auto; }
.tray p { line-height: 28px; }
.t-chev { margin: 34px 32px 0 0; }
.t-cloud { margin: 31px 0 0 0; }
.t-lang { width: 61px; margin: 13px 0 0 22px; text-align: center; }
.t-wifi { margin: 29px 14px 0 22px; }
.t-vol { margin: 29px 14px 0 0; }
.t-bat { margin: 30px 0 0 0; }
.t-time { width: 136px; margin-top: 11px; text-align: right; font-size: 20.600px; }
.t-bell { margin: 27px 23px 0 15px; }
.t-line { width: 2px; height: 28px; margin: 26px 10px 0 0; background: #8a8a8a; }

.tooltip { position: absolute; left: 2393px; top: 1441px; width: 166px; height: 52px; border-radius: 8px; background: linear-gradient(90deg, #2b3336, #27333a 45%, #223a42); box-shadow: 0 0 4px rgba(0,0,0,.5); color: #fff; text-align: center; line-height: 51px; font-size: 20.300px; }
```
